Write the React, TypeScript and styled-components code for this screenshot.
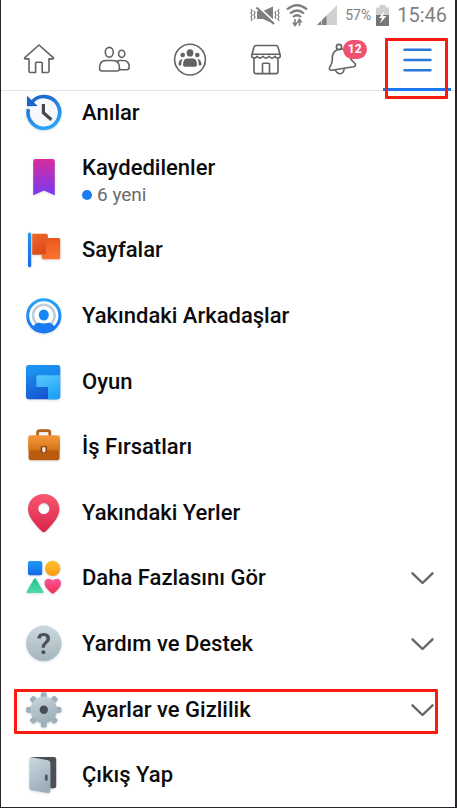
import React from "react";
import styled, { createGlobalStyle } from "styled-components";

const GlobalStyle = createGlobalStyle`
  *, *::before, *::after { box-sizing: border-box; }
  body { margin: 0; background: #fff; }
  button { font: inherit; color: inherit; }
`;

const Screen = styled.div`
  display: flex;
  flex-direction: column;
  min-height: 100vh;
  border: solid #26262a;
  border-width: 0 2px 1px 1px;
  background: #fff;
  color: #0c0c0e;
  font-family: Roboto, "Noto Sans", sans-serif;
`;

const StatusBar = styled.header`
  display: flex;
  align-items: center;
  justify-content: flex-end;
  height: 30px;
  padding-right: 8px;
  color: #7f7f7f;
`;

const StatusIcon = styled.svg<{ $gap: number }>`
  flex: none;
  margin-right: ${(p) => p.$gap}px;
`;

const BatteryLevel = styled.span`
  margin-right: 5px;
  font-size: 14px;
  line-height: 20px;
`;

const Clock = styled.time`
  font-size: 20px;
  line-height: 24px;
`;

const NavBar = styled.nav`
  display: grid;
  grid-template-columns: repeat(6, 1fr);
  height: 61px;
  border-bottom: 1px solid #e2e4e6;
`;

const NavButton = styled.button<{ $active?: boolean }>`
  position: relative;
  display: flex;
  align-items: center;
  justify-content: center;
  padding: 0;
  border: 0;
  background: none;
  color: ${(p) => (p.$active ? "#2a76d8" : "#626262")};
  cursor: pointer;
`;

const ActiveBar = styled.span`
  position: absolute;
  right: 4px;
  bottom: -1px;
  left: 4px;
  height: 3px;
  background: #1c78ee;
`;

const Badge = styled.span`
  position: absolute;
  top: 10px;
  left: 39px;
  width: 24px;
  border-radius: 10px;
  background: #ef5170;
  color: #fff;
  font-size: 12px;
  font-weight: 700;
  line-height: 19px;
  text-align: center;
`;

const Marker = styled.span<{ $inset: string }>`
  position: absolute;
  inset: ${(p) => p.$inset};
  z-index: 1;
  border: 3px solid #fb1a10;
  border-radius: 1px;
  pointer-events: none;
`;

const Viewport = styled.main`
  display: flex;
  flex: 1;
  flex-direction: column;
  overflow: hidden;
`;

const MenuList = styled.ul`
  display: flex;
  flex: 1;
  flex-direction: column;
  margin: -11px 0 -1px;
  padding: 0;
  list-style: none;
`;

const MenuItem = styled.li<{ $tall?: boolean }>`
  position: relative;
  display: flex;
  flex: ${(p) => (p.$tall ? "0 0 72px" : "1 0 64px")};
`;

const MenuButton = styled.button<{ $tall?: boolean }>`
  display: flex;
  flex: 1;
  align-items: center;
  gap: 19px;
  padding: 0 20px ${(p) => (p.$tall ? "2px" : "0")} 24px;
  border: 0;
  background: none;
  text-align: left;
  cursor: pointer;
`;

const ItemIcon = styled.svg<{ $raised?: boolean }>`
  flex: none;
  align-self: ${(p) => (p.$raised ? "flex-start" : "auto")};
  margin-top: ${(p) => (p.$raised ? "12px" : "0")};
  overflow: visible;
  filter: drop-shadow(0 1px 1px rgba(60, 80, 100, 0.2));
`;

const ItemText = styled.span`
  display: flex;
  flex: 1;
  flex-direction: column;
`;

const ItemLabel = styled.span`
  font-size: 22px;
  font-weight: 500;
  line-height: 28px;
`;

const ItemNote = styled.span`
  display: flex;
  align-items: center;
  gap: 5px;
  color: #6b6b6b;
  font-size: 19px;
  line-height: 26px;
`;

const Dot = styled.span`
  width: 10px;
  height: 10px;
  border-radius: 50%;
  background: #1b7bf5;
`;

type Stop = [string, string];
const Gradient = ({ id, stops, flat }: { id: string; stops: Stop; flat?: boolean }) => (
  <linearGradient id={id} x1="0" y1="0" x2={flat ? "0" : "0.4"} y2="1">
    <stop stopColor={stops[0]} />
    <stop offset="1" stopColor={stops[1]} />
  </linearGradient>
);

const memories = (
  <>
    <Gradient id="ring" stops={["#1c62c9", "#2ba0f7"]} />
    <circle cx="19" cy="18.3" r="16" fill="#f6f8fb" />
    <path d="M6.5 8.5A15.8 15.8 0 1 1 3.4 15" fill="none" stroke="url(#ring)" strokeWidth="3.6" />
    <path d="M2 1.7v9.8q0 .7.7.7l10-.2z" fill="#1b63cb" />
    <path d="M18.4 10v8.7l8 7" fill="none" stroke="#45474c" strokeWidth="3.2" />
  </>
);
const saved = (
  <>
    <Gradient id="mark" stops={["#d92c9c", "#7838f4"]} flat />
    <path d="M10.5 1h17q2.3 0 2.3 2.3v34L19 32.4 8.2 37.3v-34Q8.2 1 10.5 1z" fill="url(#mark)" />
  </>
);
const pages = (
  <>
    <Gradient id="pole" stops={["#2196f3", "#1768ee"]} flat />
    <Gradient id="flagBack" stops={["#f0692b", "#dd4a1b"]} />
    <Gradient id="flagFront" stops={["#e9571f", "#fa7431"]} flat />
    <path d="M7.2 2.7h14q1.6 0 1.6 1.6v19.4H7.2z" fill="url(#flagBack)" />
    <path d="M16.7 23.7h4v4.8z" fill="#b93512" />
    <path d="M20.7 8.5q0-1.5 1.5-1.5h11.6q1.4 0 1.4 1.4v18.5q0 1.4-1.4 1.4H18.2q-1.5 0-1.5-1.4v-3.2h4z" fill="url(#flagFront)" />
    <rect x="3" y="1.6" width="3.2" height="34.6" rx="1.6" fill="url(#pole)" />
  </>
);
const friends = (
  <>
    <Gradient id="near" stops={["#27a5f7", "#1673ee"]} flat />
    <circle cx="18.8" cy="18.8" r="16.1" fill="#fff" stroke="url(#near)" strokeWidth="3" />
    <circle cx="18.8" cy="18.6" r="10.8" fill="none" stroke="#c2ced8" strokeWidth="2.6" />
    <ellipse cx="18.8" cy="18" rx="5" ry="5.6" fill="#1687f4" />
    <path d="M8.6 31.2V29q1.4-2.8 5.6-3.2 4.6 1.2 9.2 0 4.2.4 5.6 3.2v2.2q-4.4 4-10.2 4t-10.2-4z" fill="#1a7bf0" />
  </>
);
const games = (
  <>
    <Gradient id="gameBg" stops={["#1f9bf5", "#1455cf"]} />
    <Gradient id="gameFg" stops={["#5bc9fd", "#1fa3f6"]} />
    <rect x="1" y="2" width="34.2" height="34.2" rx="3" fill="url(#gameBg)" />
    <path d="M1 12V5q0-3 3-3h28.2q3 0 3 3v7.500z" fill="#1b94f4" opacity=".6" />
    <path d="M35.2 12.3v20.9q0 3-3 3H23V24H11.4V14q0-1.7 1.7-1.7z" fill="url(#gameFg)" />
  </>
);
const jobs = (
  <>
    <Gradient id="caseTop" stops={["#f49a3b", "#d6731a"]} flat />
    <path d="M12.6 8V4.6q0-2 2-2h8.2q2 0 2 2V8" fill="none" stroke="#b0601b" strokeWidth="2.6" />
    <path d="M3.6 18h31v12q0 2.3-2.3 2.3H6q-2.4 0-2.4-2.3z" fill="#b95c10" />
    <path d="M5.6 7.3h27q2.4 0 2.4 2.4v10.5q0 2-2 2H5.2q-2 0-2-2V9.700q0-2.400 2.400-2.400z" fill="url(#caseTop)" />
    <path d="M15.8 18.3h6v4q0 3-3 3t-3-3z" fill="#7d3c0a" />
    <path d="M17.200 19.300h3.300v3.500q0 1.700-1.600 1.700t-1.700-1.700z" fill="#f6e9dc" />
  </>
);
const places = (
  <>
    <Gradient id="pin" stops={["#f9586f", "#d9254c"]} flat />
    <path
      fillRule="evenodd"
      d="M18.8 0C27.6 0 34.5 6.6 34.5 15c0 8-7 15.500-13.700 22.200q-2 1.700-4 0C10 30.500 3 23 3 15 3 6.600 10 0 18.800 0zm0 9a5.600 5.600 0 1 0 0 11.200 5.600 5.600 0 0 0 0-11.200z"
      fill="url(#pin)"
    />
  </>
);
const more = (
  <>
    <Gradient id="sq" stops={["#1f9bf7", "#1467e6"]} flat />
    <Gradient id="ci" stops={["#fcc22e", "#f99a12"]} flat />
    <Gradient id="tr" stops={["#22c38b", "#4fd8b0"]} flat />
    <Gradient id="he" stops={["#f9569d", "#ee2d4c"]} flat />
    <rect x="3" y="2" width="14.2" height="14.2" rx="2" fill="url(#sq)" />
    <circle cx="27.7" cy="9.4" r="7.7" fill="url(#ci)" />
    <path d="M8.8 20.2q1.2-2 2.4 0l7 12q.9 1.8-1 1.8H2.8q-1.900 0-1-1.800z" fill="url(#tr)" />
    <path d="M27.8 21.600c1.600-2.400 8.200-3.200 8.200 2.600 0 4-4.200 7.600-7.200 10q-1 .8-2 0c-3-2.400-7.200-6-7.200-10 0-5.800 6.600-5 8.200-2.600z" fill="url(#he)" />
  </>
);
const help = (
  <>
    <Gradient id="disc" stops={["#cbd9df", "#a5b5bd"]} flat />
    <circle cx="18.8" cy="18.3" r="17.7" fill="url(#disc)" />
    <text x="18.8" y="28.5" textAnchor="middle" fontFamily="Roboto, sans-serif" fontSize="30" fontWeight="500" fill="#4b4f57">
      ?
    </text>
  </>
);
const settings = (
  <>
    <Gradient id="gear" stops={["#c9d7de", "#a0b0b9"]} />
    {[0, 45, 90, 135, 180, 225, 270, 315].map((angle) => (
      <path
        key={angle}
        d="M15.6 8l.3-5.300q.1-1.500 1.500-1.500h2.800q1.400 0 1.500 1.500L22 8z"
        fill="#9dafba"
        transform={`rotate(${angle} 18.8 18.8)`}
      />
    ))}
    <circle cx="18.8" cy="18.8" r="13.2" fill="url(#gear)" />
    <circle cx="18.8" cy="18.8" r="4.2" fill="#494c55" />
  </>
);
const logout = (
  <>
    <Gradient id="door" stops={["#c9d9e1", "#9cafb9"]} />
    <path d="M6 1h23q2.2 0 2.2 2.2V30q0 2.2-2.2 2.2H6z" fill="#4b4e57" />
    <path d="M6.6 1.2 23 4.3q2.4.5 2.4 3v27.500q0 2.600-2.500 2.200L6.400 34.300q-2.100-.4-2.100-2.500V3.300q0-2.400 2.300-2.100z" fill="url(#door)" />
    <rect x="20" y="18.4" width="2.6" height="6.4" rx="1.2" fill="#4b4e57" />
  </>
);

interface Entry {
  label: string;
  art: React.ReactNode;
  note?: string;
  expandable?: boolean;
  marked?: boolean;
}

const entries: Entry[] = [
  { label: "Anılar", art: memories },
  { label: "Kaydedilenler", art: saved, note: "6 yeni" },
  { label: "Sayfalar", art: pages },
  { label: "Yakındaki Arkadaşlar", art: friends },
  { label: "Oyun", art: games },
  { label: "İş Fırsatları", art: jobs },
  { label: "Yakındaki Yerler", art: places },
  { label: "Daha Fazlasını Gör", art: more, expandable: true },
  { label: "Yardım ve Destek", art: help, expandable: true },
  { label: "Ayarlar ve Gizlilik", art: settings, expandable: true, marked: true },
  { label: "Çıkış Yap", art: logout },
];

const NavIcon = ({ children }: { children: React.ReactNode }) => (
  <svg width="36" height="36" viewBox="0 0 36 36" fill="none" stroke="currentColor" strokeWidth="1.6" strokeLinejoin="round" strokeLinecap="round" aria-hidden="true">
    {children}
  </svg>
);

const Chevron = () => (
  <svg width="25" height="16" viewBox="0 0 25 16" fill="none" stroke="#666" strokeWidth="2.4" strokeLinecap="round" strokeLinejoin="round" aria-hidden="true">
    <path d="M2.5 3.3 12.5 13l10-9.700" />
  </svg>
);

export default function App() {
  return (
    <Screen>
      <GlobalStyle />
      <StatusBar>
        <StatusIcon $gap={6} width="30" height="20" viewBox="0 0 30 20" fill="none" stroke="currentColor" strokeWidth="1.2" aria-label="Sessiz" role="img">
          <path d="M1 4l1 2-1 2 1 2-1 2 1 2-1 2M4 6l1 2-1 2 1 2-1 2M29 4l-1 2 1 2-1 2 1 2-1 2 1 2M26 6l-1 2 1 2-1 2 1 2" />
          <path d="M7 6h6l10-4.500v17L13 14H7z" fill="currentColor" stroke="none" />
          <path d="M7.500 1 25 17.500" stroke="#fff" strokeWidth="1.800" />
          <path d="M6.500 2.500 24 19" strokeWidth="2.200" />
        </StatusIcon>
        <StatusIcon $gap={9} width="22" height="24" viewBox="0 0 22 24" fill="none" stroke="currentColor" strokeWidth="2.2" aria-label="Wi-Fi" role="img">
          <path d="M1 6.5q10-8.500 20 0M4 10.500q7-6 14 0M7 14q4-3.500 8 0" />
          <path d="M9 22v-6M13.500 17v6" strokeWidth="1.600" />
          <path d="M6 19.500 9 24l3-4.500zM10.500 19.500l3-4.500 3 4.500z" fill="currentColor" stroke="none" />
        </StatusIcon>
        <StatusIcon $gap={8} width="20" height="20" viewBox="0 0 20 20" aria-label="Sinyal" role="img">
          <path d="M20 0v20H0z" fill="#d0d0d0" />
          <path d="M4 16v4H0zM9.500 10.500V20H5v-5z" fill="#7f7f7f" />
        </StatusIcon>
        <BatteryLevel>57%</BatteryLevel>
        <StatusIcon $gap={8} width="13" height="21" viewBox="0 0 13 21" aria-label="Pil" role="img">
          <path d="M3.500 0h6v2.500H13V11H0V2.500h3.500z" fill="#d0d0d0" />
          <path d="M0 10h13v11H0z" fill="#767676" />
          <path d="M8.500 6 3 13h3.200L4 18.500l6.500-7.500H7z" fill="#fff" />
        </StatusIcon>
        <Clock>15:46</Clock>
      </StatusBar>

      <NavBar aria-label="Sekmeler">
        <NavButton aria-label="Ana Sayfa">
          <NavIcon>
            <path d="M18 3 3.800 15.700q-.8 1.200.6 1.200H8v12.300q0 1.300 1.200 1.300h5.400V21q0-.8.8-.8h5q.8 0 .8.8v9.500h5.400q1.400 0 1.400-1.300V16.900h3.600q1.400 0 .6-1.200z" />
          </NavIcon>
        </NavButton>
        <NavButton aria-label="Arkadaşlar">
          <NavIcon>
            <g transform="translate(.5 0)">
              <ellipse cx="12.800" cy="10.300" rx="4" ry="4.900" />
              <ellipse cx="25.200" cy="11.800" rx="3.100" ry="3.600" />
              <path d="M9.500 18.500h7q6.500 0 6.500 7.500 0 3-2.500 3h-15Q3 29 3 26q0-7.500 6.500-7.500zM20 19.300q1.500-.8 4-.8h2.500q6.200 0 6.200 6.500 0 2.800-2.500 2.800h-7.400" />
            </g>
          </NavIcon>
        </NavButton>
        <NavButton aria-label="Gruplar">
          <NavIcon>
            <circle cx="18" cy="17.600" r="15.400" />
            <g fill="currentColor" stroke="none">
              <ellipse cx="18" cy="10.900" rx="3.400" ry="3.700" />
              <circle cx="10.700" cy="13" r="2.300" />
              <circle cx="25.300" cy="13" r="2.300" />
              <path d="M15 16.600h6q4 .6 4 6.200 0 2-2 2H13q-2 0-2-2 0-5.600 4-6.200zM10.600 17q-1.600 2.500-1.400 6.600H7.800q-1.400 0-1.300-1.400.3-4.600 4.100-5.200zM25.400 17q1.600 2.500 1.400 6.600h1.400q1.400 0 1.300-1.400-.3-4.600-4.100-5.200z" />
            </g>
          </NavIcon>
        </NavButton>
        <NavButton aria-label="Marketplace">
          <NavIcon>
            <path d="M8 3.500h20q1.500 0 2 1.600l2.200 7.900q.4 3.100-2.200 3.100-2 0-3-1.800-1.500 1.800-3 1.800t-3-1.800q-1.500 1.800-3 1.800t-3-1.800q-1.500 1.800-3 1.800t-3-1.800q-1 1.800-3 1.800-2.700 0-2.200-3.100L6 5.100q.5-1.600 2-1.600zM4 12.300h28M6 16.200v13.400q0 2 2 2h20q2 0 2-2V16.200M14.500 31.500V22q0-.8.8-.8h5.400q.8 0 .8.8v9.500" />
          </NavIcon>
        </NavButton>
        <NavButton aria-label="Bildirimler">
          <NavIcon>
            <g transform="translate(1 0)">
              <circle cx="15" cy="5" r="2.600" />
              <path d="M14 7.500C8.500 9.500 8 13.500 8.300 17.500c.2 3.500-1.300 5.500-2.700 8-.7 1.800.2 3 2 2.800l22-3.600c2-.4 2.500-2 1.200-3.400-2.500-2.300-4.300-3.300-5.200-7C24.500 10 21 6.500 17 7" />
              <path d="M11.500 28.500q1.700 3.300 4.500 3.200 3.500-.3 4-4.200" />
            </g>
          </NavIcon>
          <Badge>12</Badge>
        </NavButton>
        <NavButton aria-label="Menü" $active>
          <NavIcon>
            <path d="M5.500 7.800h26M5.500 18h26M5.500 28.300h26" strokeWidth="2.400" />
          </NavIcon>
          <ActiveBar />
          <Marker $inset="8px 7px -9px 6px" />
        </NavButton>
      </NavBar>

      <Viewport>
        <MenuList>
          {entries.map((entry) => (
            <MenuItem key={entry.label} $tall={!!entry.note}>
              <MenuButton $tall={!!entry.note} aria-expanded={entry.expandable ? false : undefined}>
                <ItemIcon width="38" height="38" viewBox="0 0 38 38" $raised={!!entry.note} aria-hidden="true">
                  {entry.art}
                </ItemIcon>
                <ItemText>
                  <ItemLabel>{entry.label}</ItemLabel>
                  {entry.note && (
                    <ItemNote>
                      <Dot />
                      {entry.note}
                    </ItemNote>
                  )}
                </ItemText>
                {entry.expandable && <Chevron />}
              </MenuButton>
              {entry.marked && <Marker $inset="12px 17px 8px 13px" />}
            </MenuItem>
          ))}
        </MenuList>
      </Viewport>
    </Screen>
  );
}
